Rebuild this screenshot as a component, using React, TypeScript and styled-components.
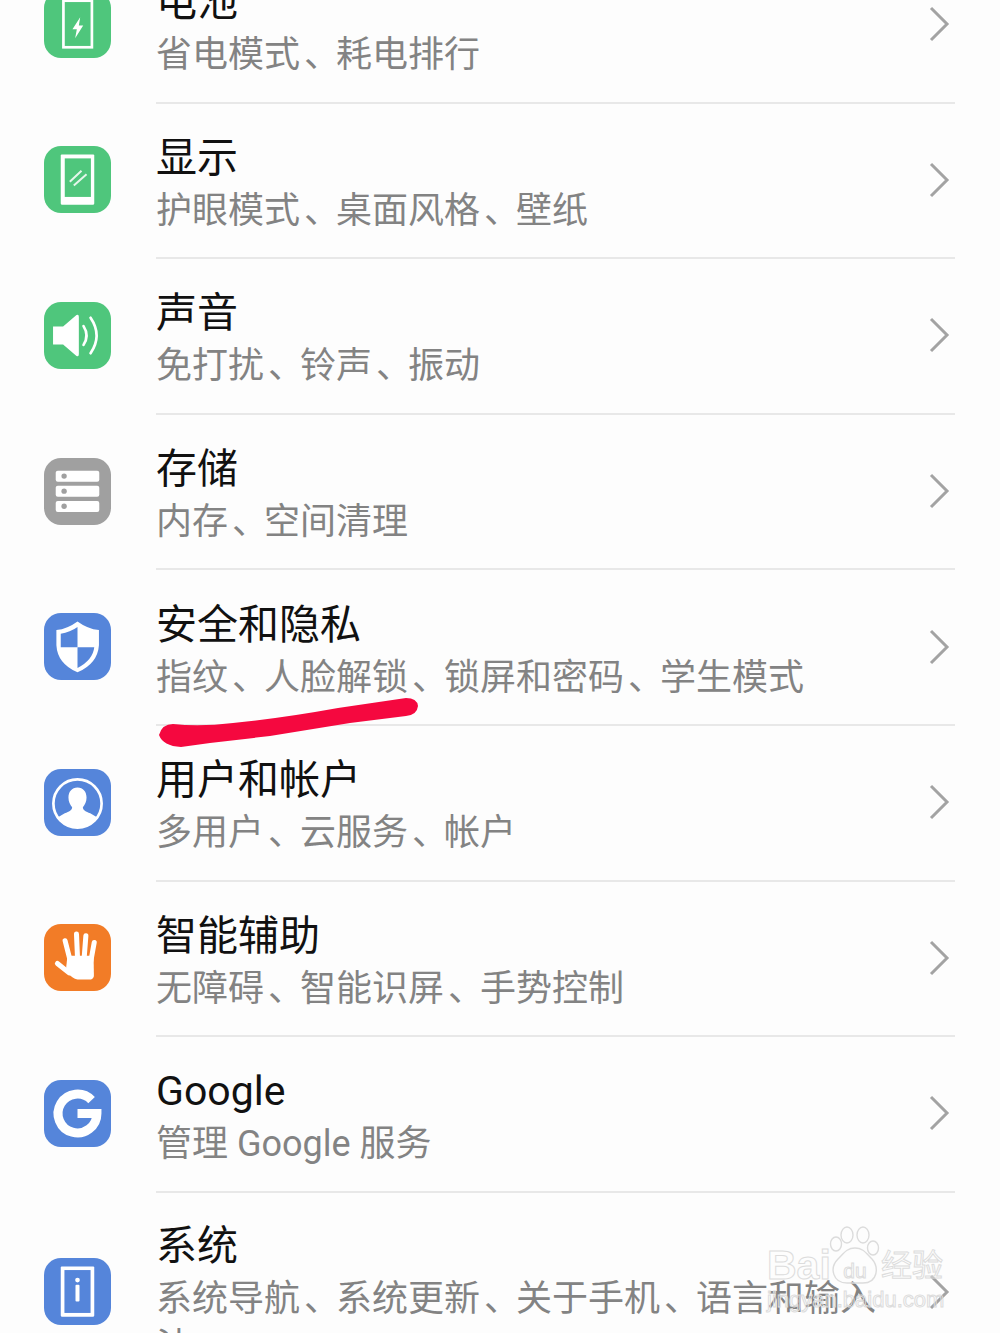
import { ReactNode } from 'react';
import styled, { createGlobalStyle } from 'styled-components';

const GlobalStyle = createGlobalStyle`
  html, body {
    margin: 0;
    padding: 0;
    background: #fdfdfd;
  }
  * { box-sizing: border-box; }
`;

const Page = styled.div`
  position: relative;
  width: 1000px;
  height: 1333px;
  overflow: hidden;
  background: #fdfdfd;
  font-family: Roboto, "Noto Sans CJK SC", sans-serif;
`;

// the list is scrolled, so its first row sits partly above the top edge
const List = styled.div`
  margin-top: -52px;
  display: flex;
  flex-direction: column;
`;

const Row = styled.div`
  display: flex;
  align-items: center;
  padding: 0 45px 0 44px;
`;

const Tile = styled.div<{ $color: string }>`
  flex: none;
  width: 67px;
  height: 67px;
  border-radius: 17px;
  background: ${({ $color }) => $color};
  margin: 0 45px 3px 0;

  svg {
    display: block;
    width: 100%;
    height: 100%;
  }
`;

const Body = styled.div<{ $last?: boolean }>`
  flex: 1;
  min-height: 155.6px;
  padding: ${({ $last }) => ($last ? '21px 0 23px' : '0')};
  display: flex;
  align-items: center;
  border-bottom: ${({ $last }) => ($last ? '0' : '2px solid #e8e8e8')};
`;

const Texts = styled.div`
  flex: 1;
  padding: 4px 40px 0 0;
`;

const Title = styled.div`
  font-size: 41px;
  line-height: 56px;
  margin-bottom: 1px;
  color: #111;
`;

const Sub = styled.div`
  font-size: 36px;
  line-height: 48px;
  color: #838383;
`;

// the enumeration comma sits further into its cell on this system font
const Comma = styled.span`
  padding-left: 4px;
  letter-spacing: -4px;
`;

const Chevron = styled.svg`
  flex: none;
  width: 22px;
  height: 38px;
  margin: 0 5px 1px 0;
`;

const Stroke = styled.svg`
  position: absolute;
  left: 150px;
  top: 690px;
  width: 280px;
  height: 70px;
`;

const Watermark = styled.div`
  position: absolute;
  left: 767px;
  top: 1226px;
  width: 190px;
  display: flex;
  flex-direction: column;
  gap: 1px;
  color: transparent;
  -webkit-text-stroke: 1px #dcdcdc;
  font-family: "Liberation Sans", "Noto Sans CJK SC", sans-serif;
`;

const MarkTop = styled.div`
  display: flex;
  align-items: flex-end;
  height: 60px;
`;

const MarkBrand = styled.span`
  width: 62px;
  font-size: 41px;
  line-height: 42px;
  font-weight: 700;
`;

const MarkPaw = styled.div`
  display: grid;
  width: 52px;
  height: 60px;

  > * {
    grid-area: 1 / 1;
  }

  svg {
    width: 52px;
    height: 60px;
  }
`;

const MarkDu = styled.span`
  place-self: end center;
  font-size: 21px;
  line-height: 30px;
`;

const MarkCn = styled.span`
  font-size: 31px;
  line-height: 38px;
  margin-bottom: 1px;
`;

const MarkUrl = styled.span`
  font-size: 22px;
  line-height: 26px;
  white-space: nowrap;
`;

const white = '#fff';

const BatteryIcon = (
  <svg viewBox="0 0 200 200">
    <path d="M82 25V12h35v13" fill={white} />
    <rect x="58" y="29" width="85" height="139" fill="none" stroke={white} strokeWidth="8" />
    <path d="M108 78L85 114h13l-5 27 24-38h-13z" fill={white} />
  </svg>
);

const DisplayIcon = (
  <svg viewBox="0 0 200 200">
    <rect x="50" y="25" width="100" height="150" rx="3" fill={white} />
    <rect x="62" y="37" width="78" height="115" fill="#4fc67c" />
    <path d="M77 107l35-33M89 118l38-34" stroke={white} strokeWidth="6" opacity=".85" />
  </svg>
);

const SoundIcon = (
  <svg viewBox="0 0 200 200">
    <path d="M27 73h30l40-34q7-3 7 5v112q0 8-7 5L57 127H27z" fill={white} />
    <path d="M118 72q18 28 0 56" fill="none" stroke={white} strokeWidth="8" strokeLinecap="round" />
    <path d="M139 47q36 53 0 106" fill="none" stroke={white} strokeWidth="8" strokeLinecap="round" />
  </svg>
);

const StorageIcon = (
  <svg viewBox="0 0 200 200">
    {[38, 83, 128].map((y) => (
      <g key={y}>
        <rect x="35" y={y} width="130" height="33" rx="6" fill={white} />
        <circle cx="60" cy={y + 16} r="8" fill="#a0a0a0" />
      </g>
    ))}
  </svg>
);

const ShieldIcon = (
  <svg viewBox="0 0 200 200">
    <path d="M100 25q30 22 64 26v45q-4 55-64 81Q40 151 37 96V51q33-4 63-26z" fill={white} />
    <path d="M100 42v60H50V62q28-4 50-20z" fill="#5585da" />
    <path d="M100 102h50q-4 38-50 62z" fill="#5585da" />
  </svg>
);

const UserIcon = (
  <svg viewBox="0 0 200 200">
    <circle cx="100" cy="103" r="72" fill="none" stroke={white} strokeWidth="8" />
    <path
      d="M100 55c17 0 27 13 27 30 0 13-5 22-11 29 0 9 9 13 22 18l24 14q-22 28-62 28t-62-28l24-14c13-5 22-9 22-18-6-7-11-16-11-29 0-17 10-30 27-30z"
      fill={white}
    />
  </svg>
);

const HandIcon = (
  <svg viewBox="0 0 200 200">
    <g fill="none" stroke={white} strokeWidth="15" strokeLinecap="round">
      <path d="M63 50l14 55" />
      <path d="M97 30l3 70" />
      <path d="M125 35l-5 65" />
      <path d="M150 55l-10 55" />
      <path d="M40 118l35 28" />
    </g>
    <path d="M70 95h78l1 60q-2 11-14 11H100q-15-3-35-25z" fill={white} />
  </svg>
);

const GoogleIcon = (
  <svg viewBox="0 0 200 200">
    <path
      d="M142 60A58 58 0 1 0 158 100H100"
      fill="none"
      stroke={white}
      strokeWidth="27"
    />
  </svg>
);

const SystemIcon = (
  <svg viewBox="0 0 200 200">
    <rect x="50" y="25" width="100" height="150" rx="3" fill={white} />
    <rect x="61" y="36" width="78" height="128" fill="#5585da" />
    <circle cx="100" cy="66" r="7" fill={white} />
    <rect x="94" y="80" width="12" height="50" rx="3" fill={white} />
  </svg>
);

interface Item {
  icon: ReactNode;
  color: string;
  title: string;
  sub: string;
}

const GREEN = '#4fc67c';
const BLUE = '#5585da';

const items: Item[] = [
  { icon: BatteryIcon, color: GREEN, title: '电池', sub: '省电模式、耗电排行' },
  { icon: DisplayIcon, color: GREEN, title: '显示', sub: '护眼模式、桌面风格、壁纸' },
  { icon: SoundIcon, color: GREEN, title: '声音', sub: '免打扰、铃声、振动' },
  { icon: StorageIcon, color: '#a0a0a0', title: '存储', sub: '内存、空间清理' },
  { icon: ShieldIcon, color: BLUE, title: '安全和隐私', sub: '指纹、人脸解锁、锁屏和密码、学生模式' },
  { icon: UserIcon, color: BLUE, title: '用户和帐户', sub: '多用户、云服务、帐户' },
  { icon: HandIcon, color: '#f27c27', title: '智能辅助', sub: '无障碍、智能识屏、手势控制' },
  { icon: GoogleIcon, color: BLUE, title: 'Google', sub: '管理 Google 服务' },
  { icon: SystemIcon, color: BLUE, title: '系统', sub: '系统导航、系统更新、关于手机、语言和输入法' },
];

const SubText = ({ text }: { text: string }) => (
  <Sub>
    {text.split('、').map((part, i) => (
      <span key={part}>
        {i > 0 && <Comma>、</Comma>}
        {part}
      </span>
    ))}
  </Sub>
);

const App = () => (
  <Page>
    <GlobalStyle />
    <List>
      {items.map((item, i) => (
        <Row key={item.title}>
          <Tile $color={item.color}>{item.icon}</Tile>
          <Body $last={i === items.length - 1}>
            <Texts>
              <Title>{item.title}</Title>
              <SubText text={item.sub} />
            </Texts>
            <Chevron viewBox="0 0 22 38">
              <path d="M3 3l16 16L3 35" fill="none" stroke="#a3a3a3" strokeWidth="3" />
            </Chevron>
          </Body>
        </Row>
      ))}
    </List>

    {/* hand-drawn red underline */}
    <Stroke viewBox="150 690 280 70">
      <path
        d="M159 735q3-11 14-11 27 3 60-1 50-5 105-15l68-10q11 0 12 8-1 9-12 10l-56 7-80 13-60 7-29 4q-18-1-22-12z"
        fill="#f5083f"
      />
    </Stroke>

    <Watermark>
      <MarkTop>
        <MarkBrand>Bai</MarkBrand>
        <MarkPaw>
          <svg viewBox="0 0 52 60">
            <g fill="none" stroke="#dcdcdc" strokeWidth="1.4">
              <ellipse cx="18" cy="9" rx="6" ry="8" />
              <ellipse cx="34" cy="9" rx="6" ry="8" />
              <ellipse cx="7" cy="18" rx="5.5" ry="7" />
              <ellipse cx="44" cy="22" rx="5.5" ry="7" />
              <path d="M26 22c8 0 11 5 17 11 7 8 6 24-9 24H18C4 57 0 42 9 33c6-6 9-11 17-11z" />
            </g>
          </svg>
          <MarkDu>du</MarkDu>
        </MarkPaw>
        <MarkCn>经验</MarkCn>
      </MarkTop>
      <MarkUrl>jingyan.baidu.com</MarkUrl>
    </Watermark>
  </Page>
);

export default App;
